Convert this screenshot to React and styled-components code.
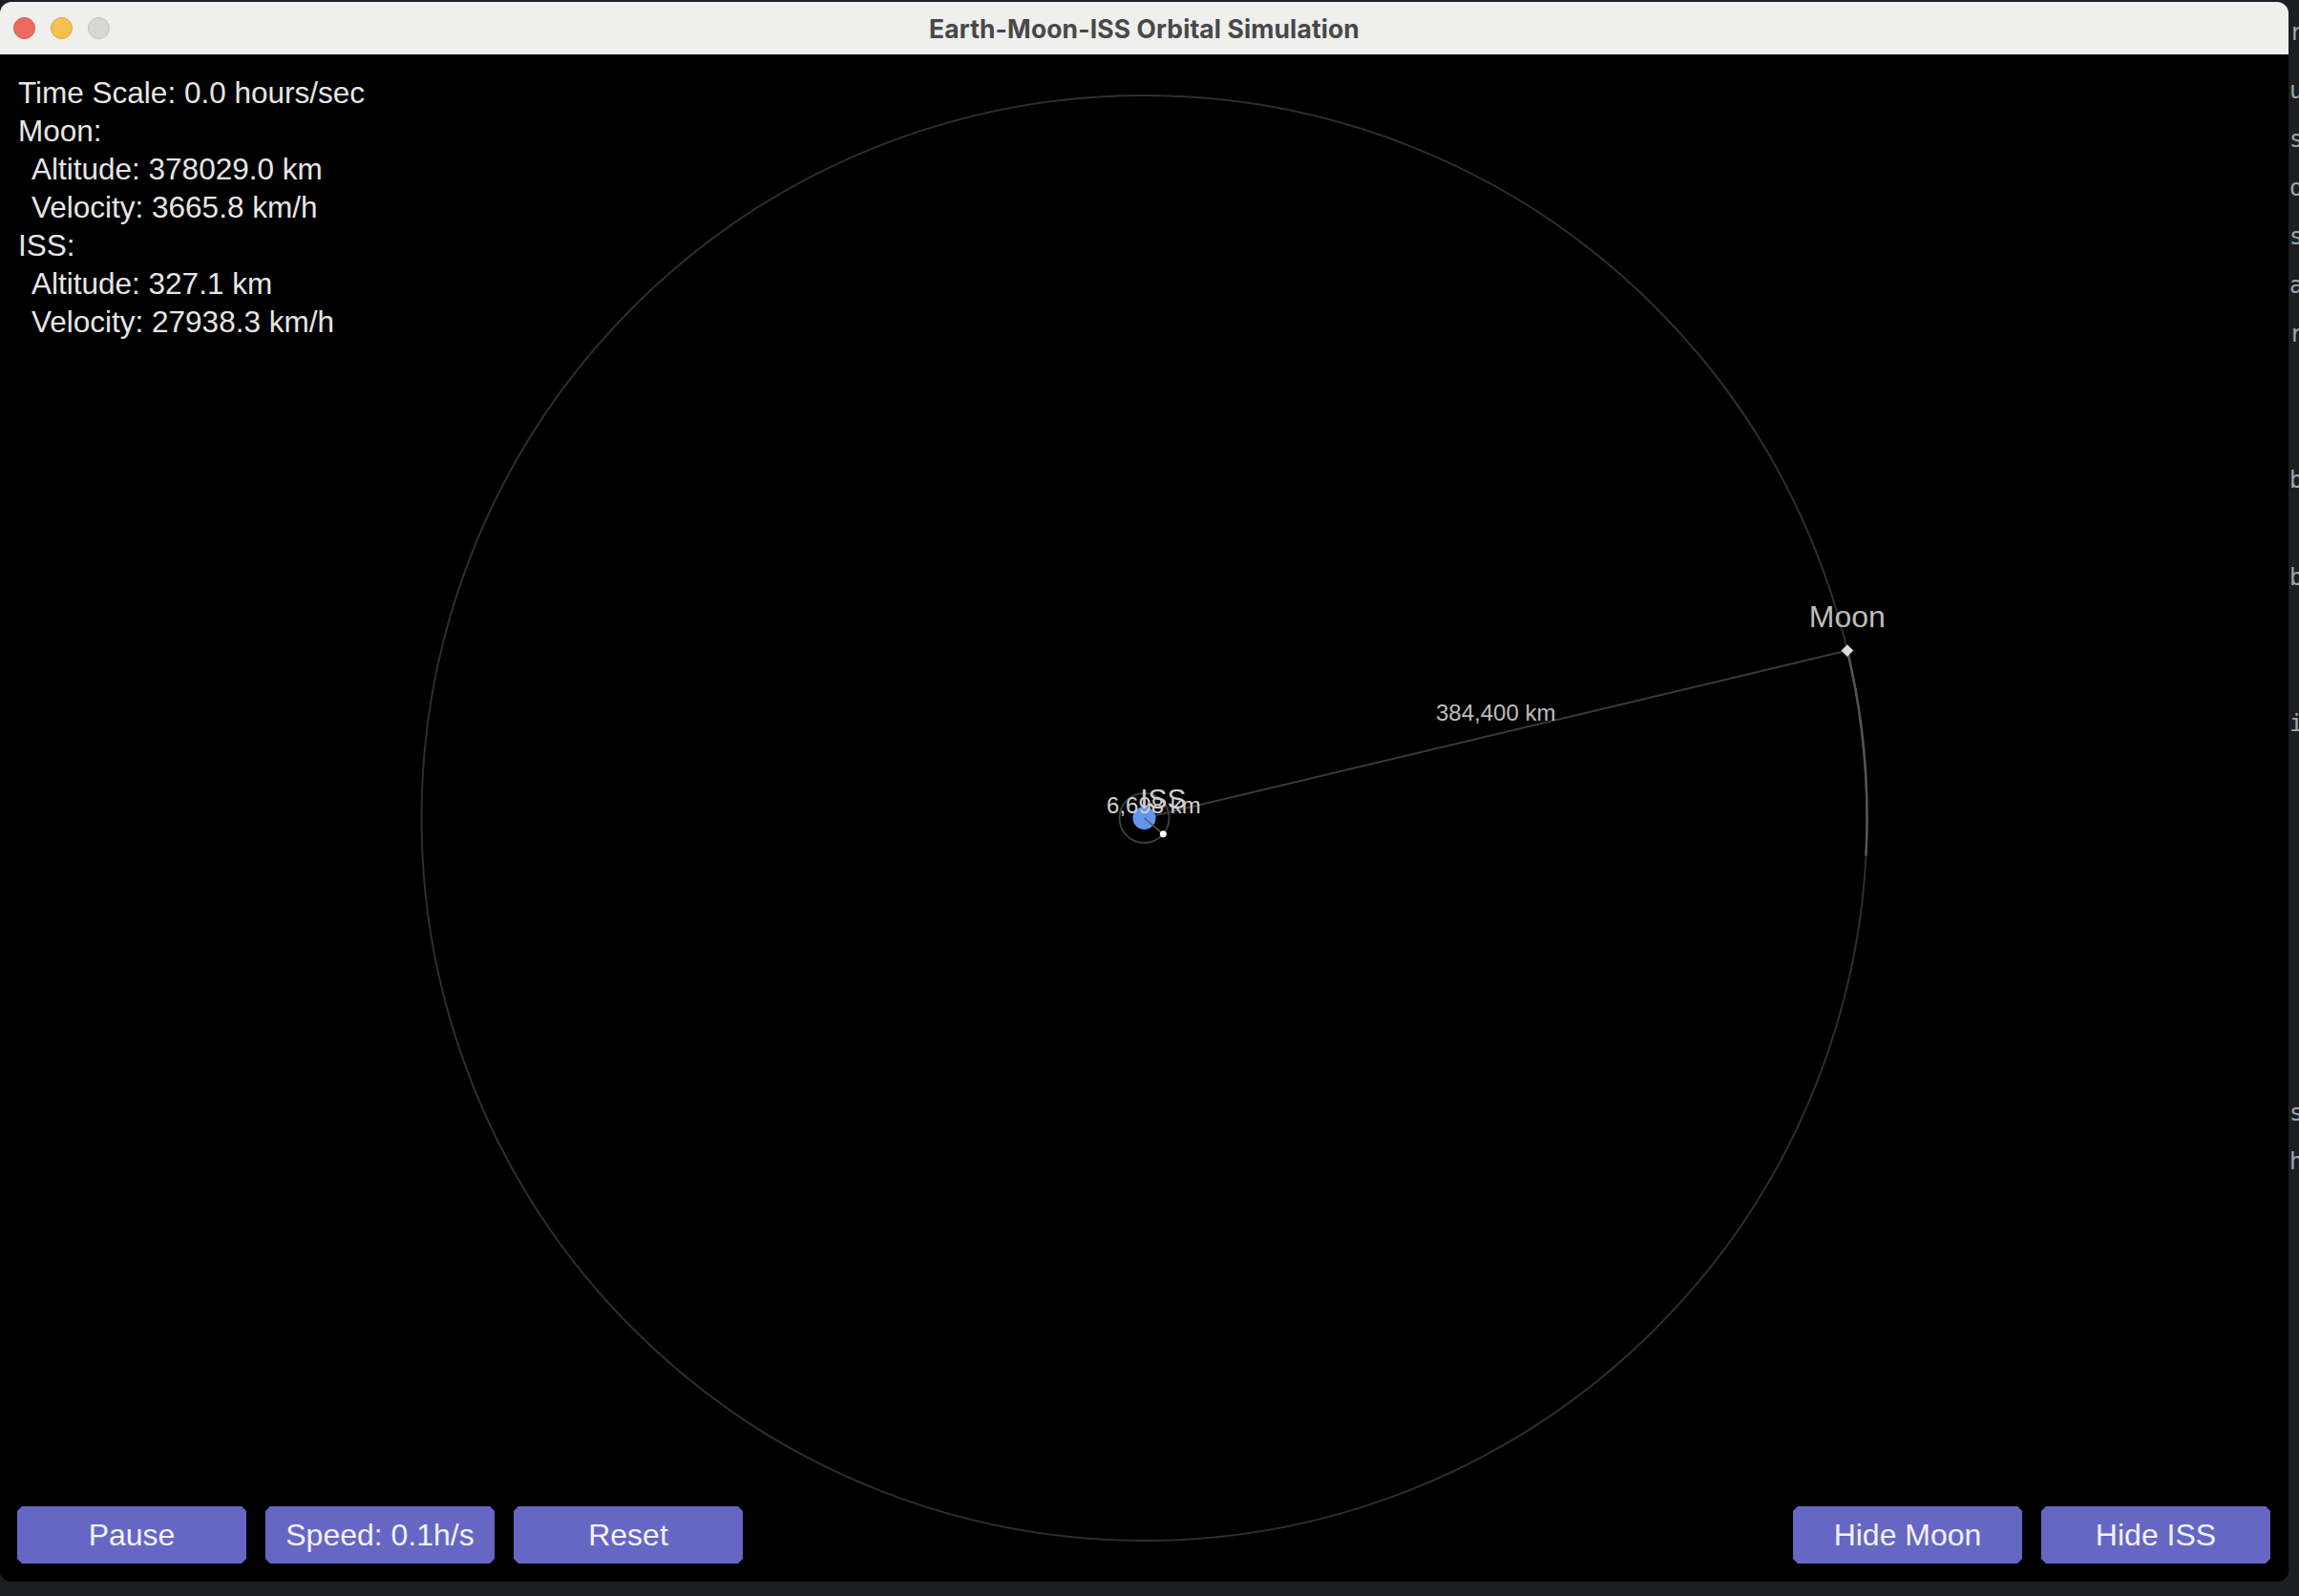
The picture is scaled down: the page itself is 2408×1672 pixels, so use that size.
import React from 'react'
import styled, { createGlobalStyle } from 'styled-components'

const GlobalStyle = createGlobalStyle`
  html, body {
    margin: 0;
    padding: 0;
    background: #1d1e21;
  }
  body {
    width: 2408px;
    height: 1672px;
    overflow: hidden;
  }
`

// canvas geometry (stage coordinates, 2397 x 1600)
const CX = 1198.5
const CY = 800
const MOON_R = 757
const MOON_ANGLE = -13.4
const ISS_R = 26
const ISS_ANGLE = 40.3

const polar = (r, deg) => {
    const a = (deg * Math.PI) / 180
    return [CX + r * Math.cos(a), CY + r * Math.sin(a)]
}

const Desktop = styled.div`
    display: flex;
    align-items: flex-start;
    width: 2408px;
    height: 1672px;
    background: #1d1e21;
`

const Window = styled.div`
    flex: none;
    width: 2397px;
    height: 1655px;
    margin-top: 2px;
    display: flex;
    flex-direction: column;
    border-radius: 12px;
    overflow: hidden;
    background: #000;
`

const TitleBar = styled.div`
    flex: none;
    height: 55px;
    display: grid;
    grid-template-columns: 1fr auto 1fr;
    align-items: center;
    background: #efefed;
`

const Lights = styled.div`
    display: flex;
    gap: 16px;
    padding-left: 14px;
`

const Light = styled.span`
    width: 23px;
    height: 23px;
    border-radius: 50%;
    box-sizing: border-box;
    background: ${p => p.$color};
    border: 1px solid ${p => p.$edge};
`

const Title = styled.div`
    font-family: Inter, "Noto Sans", sans-serif;
    font-weight: 700;
    font-size: 26.5px;
    color: #484848;
    letter-spacing: 0.1px;
`

const Stage = styled.div`
    flex: 1;
    position: relative;
    display: flex;
    flex-direction: column;
    justify-content: space-between;
    background: #000;
`

const OrbitCanvas = styled.svg`
    position: absolute;
    inset: 0;
    width: 100%;
    height: 100%;
`

const InfoPanel = styled.div`
    position: relative;
    padding: 20px 0 0 19px;
    font-family: "Liberation Sans", Arial, sans-serif;
    font-size: 31.5px;
    line-height: 40px;
    color: #e6e6e6;
`

const InfoLine = styled.div`
    padding-left: ${p => (p.$indent ? '14px' : '0')};
    white-space: pre;
`

const ButtonBar = styled.div`
    position: relative;
    display: flex;
    justify-content: space-between;
    padding: 0 19px 19px 18px;
`

const ButtonGroup = styled.div`
    display: flex;
    gap: 20px;
`

const SimButton = styled.button`
    width: 240px;
    height: 60px;
    border: none;
    padding: 0;
    background: #6666c5;
    color: #f2f2fa;
    font-family: "Liberation Sans", Arial, sans-serif;
    font-size: 32px;
    clip-path: polygon(5px 0, calc(100% - 5px) 0, 100% 5px, 100% calc(100% - 5px),
        calc(100% - 5px) 100%, 5px 100%, 0 calc(100% - 5px), 0 5px);
    cursor: pointer;
`

const EditorPeek = styled.div`
    flex: 1;
    height: 100%;
    overflow: hidden;
    padding-top: 17px;
    box-sizing: border-box;
    font-family: "DejaVu Sans Mono", monospace;
    font-size: 24px;
    color: #a3a6ac;
`

const PeekLine = styled.div`
    height: ${p => p.$h || 51}px;
    line-height: 34px;
    white-space: pre;
    margin-left: 1px;
`

const Label = styled.text`
    font-family: "Liberation Sans", Arial, sans-serif;
    font-size: ${p => p.$size}px;
    fill: ${p => p.$color};
`

const info = [
    { text: 'Time Scale: 0.0 hours/sec' },
    { text: 'Moon:' },
    { text: 'Altitude: 378029.0 km', indent: true },
    { text: 'Velocity: 3665.8 km/h', indent: true },
    { text: 'ISS:' },
    { text: 'Altitude: 327.1 km', indent: true },
    { text: 'Velocity: 27938.3 km/h', indent: true },
]

const peek = [
    { t: 'r', h: 61 },
    { t: 'u' }, { t: 's' }, { t: 'o' }, { t: 's' }, { t: 'a' }, { t: 're' },
    { t: '' }, { t: '' }, { t: 'b' }, { t: '' }, { t: 'b' }, { t: '' }, { t: '' },
    { t: 'io' }, { t: '' }, { t: '' }, { t: '' }, { t: '' }, { t: '' }, { t: '' },
    { t: '' }, { t: 's' }, { t: 'h' },
]

const Orbits = () => {
    const [mx, my] = polar(MOON_R, MOON_ANGLE)
    const [tx, ty] = polar(MOON_R, 3)
    const [ix, iy] = polar(ISS_R, ISS_ANGLE)
    return (
        <OrbitCanvas viewBox="0 0 2397 1600">
            <circle cx={CX} cy={CY} r={MOON_R} fill="none" stroke="#2e2e2e" strokeWidth="2" />
            <path d={`M ${mx} ${my} A ${MOON_R} ${MOON_R} 0 0 1 ${tx} ${ty}`}
                fill="none" stroke="#555" strokeWidth="2.5" />
            <line x1={CX} y1={CY} x2={mx} y2={my} stroke="#3a3a3a" strokeWidth="2" />
            <Label x={(CX + mx) / 2} y={(CY + my) / 2 - 21} $size={24} $color="#bdbdbd"
                textAnchor="middle" dominantBaseline="middle">384,400 km</Label>

            <circle cx={CX} cy={CY} r={ISS_R} fill="none" stroke="#3d3d3d" strokeWidth="2" />
            <circle cx={CX} cy={CY} r="12" fill="#6495ed" />
            <line x1={CX} y1={CY} x2={ix} y2={iy} stroke="#555" strokeWidth="1.5" />
            <circle cx={ix} cy={iy} r="3.5" fill="#fff" />
            <Label x={(CX + ix) / 2} y={(CY + iy) / 2 - 20} $size={24} $color="#d0d0d0"
                textAnchor="middle" dominantBaseline="middle">6,698 km</Label>
            <Label x={ix} y={iy - 35} $size={30} $color="#cfcfcf"
                textAnchor="middle" dominantBaseline="middle">ISS</Label>

            <rect x={mx - 4.5} y={my - 4.5} width="9" height="9" fill="#dcdcdc"
                transform={`rotate(45 ${mx} ${my})`} />
            <Label x={mx} y={my - 33} $size={32} $color="#bdbdbd"
                textAnchor="middle" dominantBaseline="middle">Moon</Label>
        </OrbitCanvas>
    )
}

const App = () => (
    <Desktop>
        <GlobalStyle />
        <Window>
            <TitleBar>
                <Lights>
                    <Light $color="#ee6a5f" $edge="#d8564c" />
                    <Light $color="#f5c04f" $edge="#dca53a" />
                    <Light $color="#d7d7d5" $edge="#c2c2c0" />
                </Lights>
                <Title>Earth-Moon-ISS Orbital Simulation</Title>
                <span />
            </TitleBar>
            <Stage>
                <Orbits />
                <InfoPanel>
                    {info.map((l, i) => (
                        <InfoLine key={i} $indent={l.indent}>{l.text}</InfoLine>
                    ))}
                </InfoPanel>
                <ButtonBar>
                    <ButtonGroup>
                        <SimButton>Pause</SimButton>
                        <SimButton>Speed: 0.1h/s</SimButton>
                        <SimButton>Reset</SimButton>
                    </ButtonGroup>
                    <ButtonGroup>
                        <SimButton>Hide Moon</SimButton>
                        <SimButton>Hide ISS</SimButton>
                    </ButtonGroup>
                </ButtonBar>
            </Stage>
        </Window>
        <EditorPeek>
            {peek.map((l, i) => <PeekLine key={i} $h={l.h}>{l.t}</PeekLine>)}
        </EditorPeek>
    </Desktop>
)

export default App
